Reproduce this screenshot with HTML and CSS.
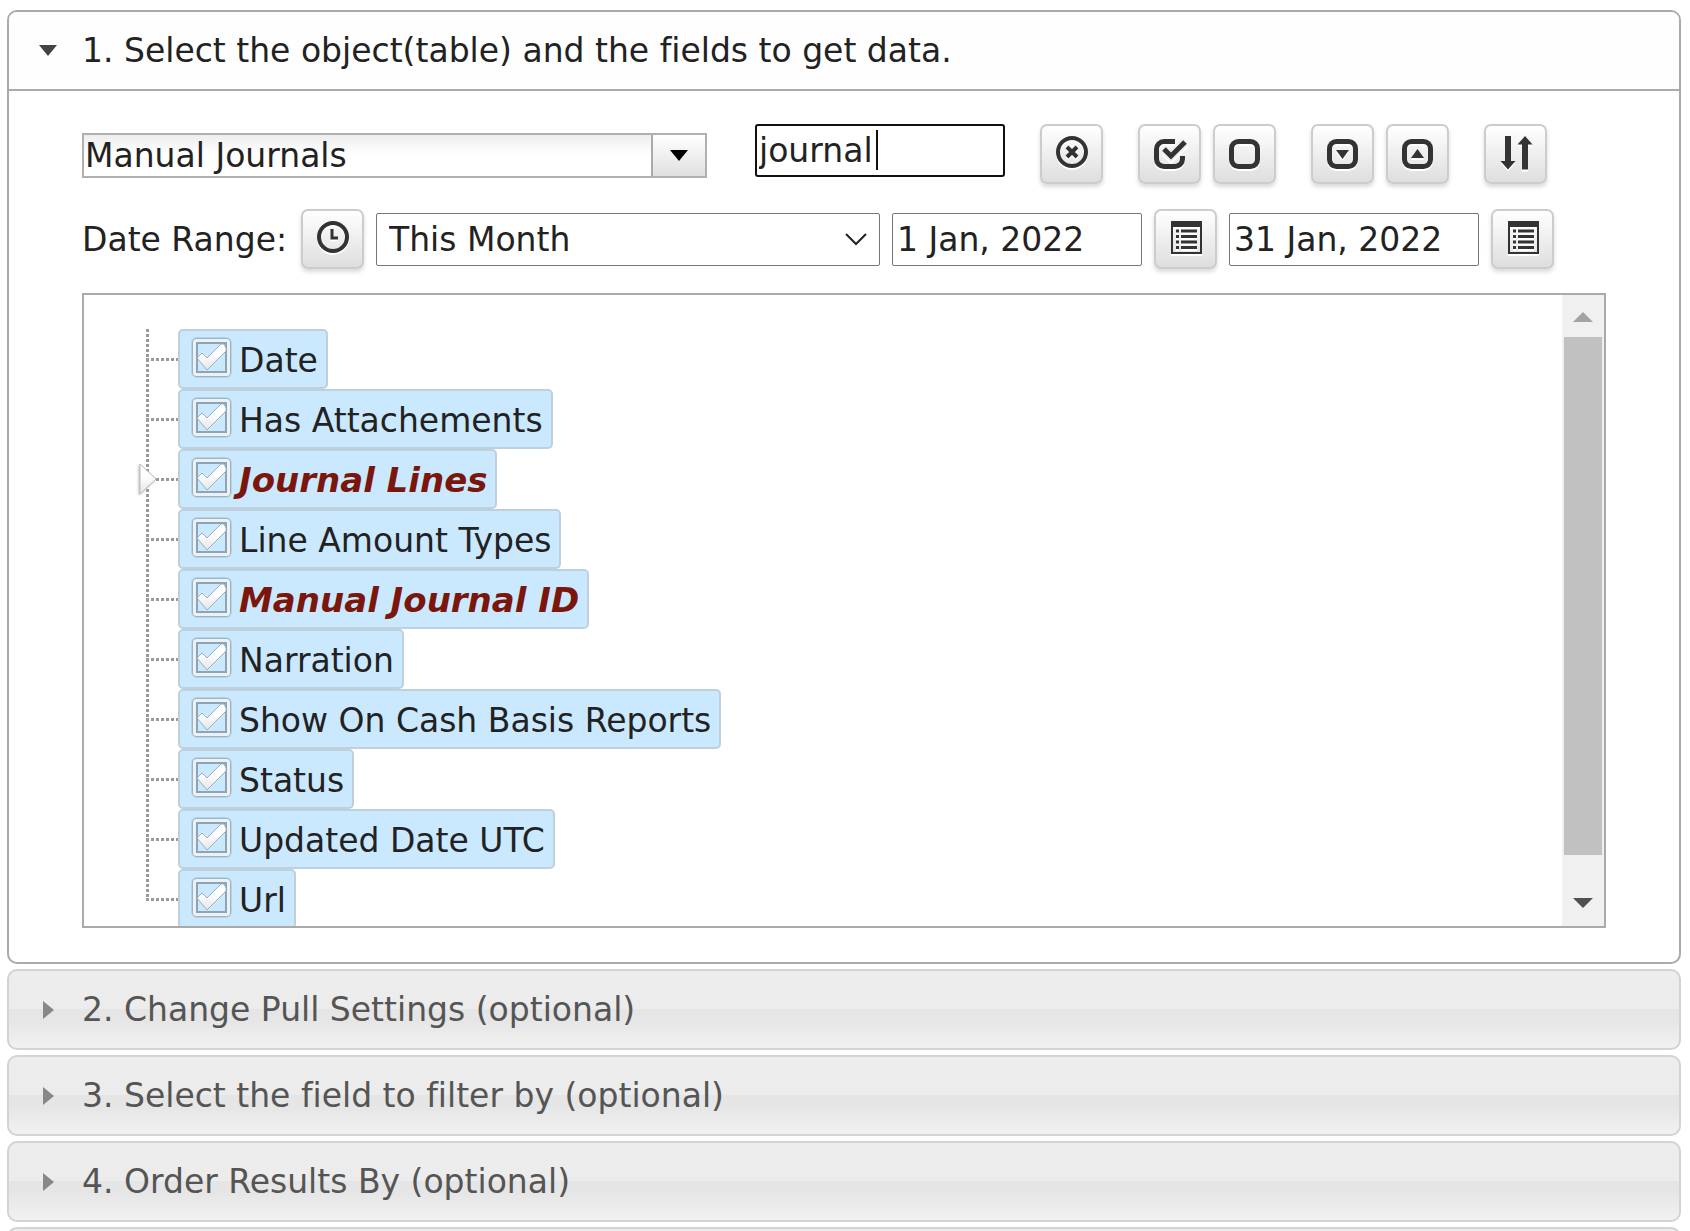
FILE: index.html
```html
<!DOCTYPE html>
<html lang="en">
<head>
    <meta charset="UTF-8">
    <title>Get Data</title>
    <link rel="stylesheet" href="styles.css">
</head>
<body>
    <!-- Shared checkbox drawing for the tree -->
    <svg class="defs" aria-hidden="true">
        <linearGradient id="tickFill" x1="0" y1="0" x2="0" y2="1">
            <stop offset="0.4" stop-color="#fff"/>
            <stop offset="1" stop-color="#e4e4e4"/>
        </linearGradient>
        <symbol id="tick" viewBox="0 0 42 42">
            <rect x="2" y="2" width="39" height="39" rx="5" fill="none" stroke="#a9c3d4" stroke-width="2" opacity="0.6"/>
            <rect x="3" y="3" width="37" height="37" rx="4" fill="none" stroke="#9cb4c3" stroke-width="2"/>
            <rect x="6.500" y="6.500" width="30" height="30" fill="none" stroke="#89a5b7" stroke-width="3"/>
            <rect x="4.500" y="4.500" width="34" height="34" rx="2" fill="none" stroke="#eef1f3" stroke-width="3"/>
            <path d="M7 22l5-5 5 5L31 8h3l2 4v3L17 34z" fill="url(#tickFill)" stroke="#9ab0be" stroke-width="1"/>
        </symbol>
    </svg>

    <main class="accordion">
        <!-- Step 1: object and fields -->
        <section class="panel">
            <h3><button class="header active" type="button"><span class="arrow-box"><i class="arrow-down"></i></span>1. Select the object(table) and the fields to get data.</button></h3>
            <div class="content">
                <div class="row">
                    <div class="combo">
                        <select aria-label="Object">
                            <option>Manual Journals</option>
                        </select>
                        <span class="combo-arrow"><i class="arrow-down"></i></span>
                    </div>
                    <div class="search">
                        <input type="text" value="journal" aria-label="Search fields">
                        <span class="caret"></span>
                    </div>
                    <button class="icon-btn" type="button" aria-label="Clear">
                        <svg viewBox="0 0 36 36"><circle cx="18" cy="16" r="14" fill="none" stroke="#333" stroke-width="4"/><path d="M13 11l10 10M23 11L13 21" stroke="#333" stroke-width="4"/></svg>
                    </button>
                    <div class="group">
                        <button class="icon-btn" type="button" aria-label="Check all">
                            <svg viewBox="0 0 36 36"><path d="M23 5.500H12a7.500 7.500 0 0 0-7.500 7.500v10a7.500 7.500 0 0 0 7.500 7.500h11a7.500 7.500 0 0 0 7.500-7.500v-3" fill="none" stroke="#333" stroke-width="5"/><path d="M13 14l6 6L33 6" fill="none" stroke="#eee" stroke-width="9"/><path d="M12 13l7 7L33 6" fill="none" stroke="#333" stroke-width="5"/></svg>
                        </button>
                        <button class="icon-btn" type="button" aria-label="Uncheck all">
                            <svg viewBox="0 0 36 36"><rect x="4.500" y="5.500" width="26" height="25" rx="7" fill="none" stroke="#333" stroke-width="5"/></svg>
                        </button>
                    </div>
                    <div class="group">
                        <button class="icon-btn" type="button" aria-label="Expand all">
                            <svg viewBox="0 0 36 36"><rect x="4.500" y="5.500" width="26" height="25" rx="7" fill="none" stroke="#333" stroke-width="5"/><path d="M11 14h13l-6.500 9z" fill="#333"/></svg>
                        </button>
                        <button class="icon-btn" type="button" aria-label="Collapse all">
                            <svg viewBox="0 0 36 36"><rect x="4.500" y="5.500" width="26" height="25" rx="7" fill="none" stroke="#333" stroke-width="5"/><path d="M11 22h13l-6.500-9z" fill="#333"/></svg>
                        </button>
                    </div>
                    <button class="icon-btn" type="button" aria-label="Sort">
                        <svg viewBox="0 0 36 36"><path d="M7 0h6v25h4.500L10 33.500 2.500 25H7zM24 33.500h6V8.500h4.500L27 0l-7.500 8.500H24z" fill="#333"/></svg>
                    </button>
                </div>

                <div class="row dates">
                    <span class="label">Date Range:</span>
                    <button class="icon-btn" type="button" aria-label="Time">
                        <svg viewBox="0 0 36 36"><circle cx="18" cy="16" r="14" fill="none" stroke="#333" stroke-width="4"/><path d="M17 8v9h6" fill="none" stroke="#333" stroke-width="3"/></svg>
                    </button>
                    <div class="period">
                        <select aria-label="Date range">
                            <option>This Month</option>
                        </select>
                        <svg viewBox="0 0 22 14"><path d="M1 2l10 10L21 2" fill="none" stroke="#222" stroke-width="2"/></svg>
                    </div>
                    <input class="date" type="text" value="1 Jan, 2022" aria-label="From">
                    <button class="icon-btn" type="button" aria-label="Pick start date">
                        <svg viewBox="0 0 36 36"><path d="M3 0h31v33H3zM5 6v25h27V6z" fill="#333" fill-rule="evenodd"/><path d="M8 10h3m2 0h16M8 15.500h3m2 0h16M8 21h3m2 0h16M8 26.500h3m2 0h16" stroke="#333" stroke-width="3"/></svg>
                    </button>
                    <input class="date" type="text" value="31 Jan, 2022" aria-label="To">
                    <button class="icon-btn" type="button" aria-label="Pick end date">
                        <svg viewBox="0 0 36 36"><path d="M3 0h31v33H3zM5 6v25h27V6z" fill="#333" fill-rule="evenodd"/><path d="M8 10h3m2 0h16M8 15.500h3m2 0h16M8 21h3m2 0h16M8 26.500h3m2 0h16" stroke="#333" stroke-width="3"/></svg>
                    </button>
                </div>

                <!-- Field tree -->
                <div class="tree">
                    <ul>
                        <li><label><span class="check"><input type="checkbox" checked><svg><use href="#tick"/></svg></span>Date</label></li>
                        <li><label><span class="check"><input type="checkbox" checked><svg><use href="#tick"/></svg></span>Has Attachements</label></li>
                        <li>
                            <button class="expander" type="button" aria-label="Expand Journal Lines"><svg viewBox="0 0 20 34"><path d="M2 2l16 15L2 32z" fill="url(#tickFill)" stroke="#bbb" stroke-width="1"/></svg></button>
                            <label class="key"><span class="check"><input type="checkbox" checked><svg><use href="#tick"/></svg></span>Journal Lines</label>
                        </li>
                        <li><label><span class="check"><input type="checkbox" checked><svg><use href="#tick"/></svg></span>Line Amount Types</label></li>
                        <li><label class="key"><span class="check"><input type="checkbox" checked><svg><use href="#tick"/></svg></span>Manual Journal ID</label></li>
                        <li><label><span class="check"><input type="checkbox" checked><svg><use href="#tick"/></svg></span>Narration</label></li>
                        <li><label><span class="check"><input type="checkbox" checked><svg><use href="#tick"/></svg></span>Show On Cash Basis Reports</label></li>
                        <li><label><span class="check"><input type="checkbox" checked><svg><use href="#tick"/></svg></span>Status</label></li>
                        <li><label><span class="check"><input type="checkbox" checked><svg><use href="#tick"/></svg></span>Updated Date UTC</label></li>
                        <li><label><span class="check"><input type="checkbox" checked><svg><use href="#tick"/></svg></span>Url</label></li>
                    </ul>
                    <div class="scrollbar">
                        <i class="scroll-up"></i>
                        <div class="track"><div class="thumb"></div></div>
                        <i class="scroll-down"></i>
                    </div>
                </div>
            </div>
        </section>

        <!-- Collapsed steps -->
        <h3><button class="header" type="button"><span class="arrow-box"><i class="arrow-right"></i></span>2. Change Pull Settings (optional)</button></h3>
        <h3><button class="header" type="button"><span class="arrow-box"><i class="arrow-right"></i></span>3. Select the field to filter by (optional)</button></h3>
        <h3><button class="header" type="button"><span class="arrow-box"><i class="arrow-right"></i></span>4. Order Results By (optional)</button></h3>
        <h3><button class="header" type="button" aria-label="Next step"><span class="arrow-box"><i class="arrow-right"></i></span></button></h3>
    </main>
</body>
</html>
```

FILE: styles.css
```css
* {
    box-sizing: border-box;
}

body {
    margin: 0;
    font-family: Verdana, "DejaVu Sans", sans-serif;
    font-size: 33px;
    font-variant-ligatures: none;
    color: #222;
    background-color: #fff;
}

button, input, select {
    font: inherit;
    font-variant-ligatures: none;
    color: inherit;
    margin: 0;
}

h3 {
    margin: 0;
    font-size: 33px;
    font-weight: normal;
}

.defs {
    display: block;
    width: 0;
    height: 0;
}

/* Accordion */
.accordion {
    display: flex;
    flex-direction: column;
    gap: 5px;
    height: 100vh;
    padding: 10px 9px 0 7px;
    overflow: hidden;
}

.accordion > * {
    flex-shrink: 0;
}

.header {
    display: flex;
    align-items: center;
    width: 100%;
    height: 81px;
    padding: 0 27px;
    border: 2px solid #d3d3d3;
    border-radius: 10px;
    background: linear-gradient(#ededed 0, #ececec 50%, #e5e5e5 50%, #e6e6e6 65%, #f1f1f1 100%);
    color: #555;
    text-align: left;
}

.panel {
    border: 2px solid #aaa;
    border-radius: 10px;
}

.header.active {
    height: 79px;
    border-width: 0 0 2px;
    border-color: #aaa;
    border-radius: 8px 8px 0 0;
    background: #fefefe;
    color: #222;
}

.arrow-box {
    display: flex;
    justify-content: center;
    width: 24px;
    margin-right: 22px;
}

.arrow-down {
    border: 9px solid transparent;
    border-top: 11px solid #444;
    border-bottom: 0;
}

.arrow-right {
    border: 9px solid transparent;
    border-left: 11px solid #888;
    border-right: 0;
}

.content {
    padding: 33px 73px 34px;
}

/* Toolbar rows */
.row {
    display: flex;
    align-items: flex-start;
    gap: 35px;
    margin-bottom: 25px;
}

.group {
    display: flex;
    gap: 12px;
}

.dates {
    align-items: center;
    gap: 12px;
    margin-bottom: 24px;
}

.label {
    width: 207px;
    white-space: nowrap;
}

.combo, .period {
    display: grid;
    align-items: center;
}

.combo > *, .period > * {
    grid-area: 1 / 1;
}

.combo {
    flex: 0 1 625px;
    height: 45px;
    margin: 9px 13px 0 0;
}

select {
    appearance: none;
    width: 100%;
    height: 100%;
    border-radius: 0;
}

.combo select {
    padding: 0 60px 0 1px;
    border: 2px solid #b0b0b0;
    background: linear-gradient(#eee 0, #fff 50%);
}

.combo-arrow {
    display: flex;
    align-items: center;
    justify-content: center;
    justify-self: end;
    width: 54px;
    height: 41px;
    margin-right: 2px;
    border-left: 2px solid #aaa;
    background: linear-gradient(#fff, #e0e0e0);
    pointer-events: none;
}

.combo-arrow .arrow-down {
    border-top-color: #000;
}

.search {
    position: relative;
    flex: 0 1 250px;
}

.search input {
    display: block;
    width: 100%;
    height: 53px;
    padding: 0 2px;
    border: 2px solid #101010;
    border-radius: 3px;
    background: #fff;
    outline: none;
}

.caret {
    position: absolute;
    top: 6px;
    left: 121px;
    width: 2px;
    height: 40px;
    background: #111;
}

.icon-btn {
    display: flex;
    align-items: center;
    justify-content: center;
    flex: none;
    width: 63px;
    height: 60px;
    padding: 0;
    border: 2px solid #ccc;
    border-radius: 7px;
    background: linear-gradient(#fff, #dedede);
    box-shadow: 0 3px 4px rgba(0, 0, 0, 0.15);
}

.icon-btn svg {
    width: 36px;
    height: 36px;
    filter: drop-shadow(0 2px 0 #fff);
}

.period {
    flex: 0 1 504px;
    height: 53px;
}

.period select {
    padding: 0 50px 0 12px;
    border: 1px solid #767676;
    border-radius: 2px;
    background: #fff;
}

.period svg {
    justify-self: end;
    width: 22px;
    height: 14px;
    margin-right: 13px;
    pointer-events: none;
}

.date {
    flex: 0 1 250px;
    min-width: 0;
    height: 53px;
    padding: 0 4px;
    border: 1px solid #767676;
    border-radius: 2px;
    background: #fff;
}

/* Field tree */
.tree {
    display: flex;
    height: 635px;
    border: 2px solid #aaa;
    overflow: hidden;
}

.tree ul {
    flex: 1;
    margin: 0;
    padding: 34px 0 0 62px;
    list-style: none;
}

.tree li {
    position: relative;
    display: flex;
    align-items: center;
    height: 60px;
    background: repeating-linear-gradient(#999 0, #999 3px, #fff 3px, #fff 5px) 0 0 / 3px 100% no-repeat;
}

.tree li:last-child {
    background-size: 3px 32px;
}

.tree li::before {
    content: "";
    width: 32px;
    height: 3px;
    background: repeating-linear-gradient(90deg, #999 0, #999 3px, #fff 3px, #fff 5px);
}

.tree label {
    display: flex;
    align-items: center;
    height: 60px;
    padding: 2px 8px 0 10px;
    border: 2px solid #bdd0dc;
    border-radius: 5px;
    background: #cbe9fe;
    white-space: nowrap;
}

.tree .key {
    color: #7a160c;
    font-size: 34px;
    font-weight: bold;
    font-style: italic;
}

.check {
    display: grid;
    width: 42px;
    height: 42px;
    margin: 0 7px 6px 0;
}

.check > * {
    grid-area: 1 / 1;
    width: 42px;
    height: 42px;
}

.check input {
    appearance: none;
}

.check svg {
    pointer-events: none;
}

.expander {
    position: absolute;
    top: 13px;
    left: -8px;
    width: 20px;
    height: 34px;
    padding: 0;
    border: 0;
    background: none;
}

.expander svg {
    display: block;
    filter: drop-shadow(-1px 1px 1px #bbb);
}

/* Scrollbar */
.scrollbar {
    display: flex;
    flex-direction: column;
    align-items: center;
    width: 42px;
    background: #f0f0f0;
}

.track {
    flex: 1;
    width: 38px;
    margin: 15px 0 10px;
}

.thumb {
    height: 94%;
    background: #c1c1c1;
}

.scroll-up {
    margin-top: 17px;
    border: 10px solid transparent;
    border-top: 0;
    border-bottom-color: #a3a3a3;
}

.scroll-down {
    margin-bottom: 18px;
    border: 10px solid transparent;
    border-bottom: 0;
    border-top-color: #505050;
}
```
